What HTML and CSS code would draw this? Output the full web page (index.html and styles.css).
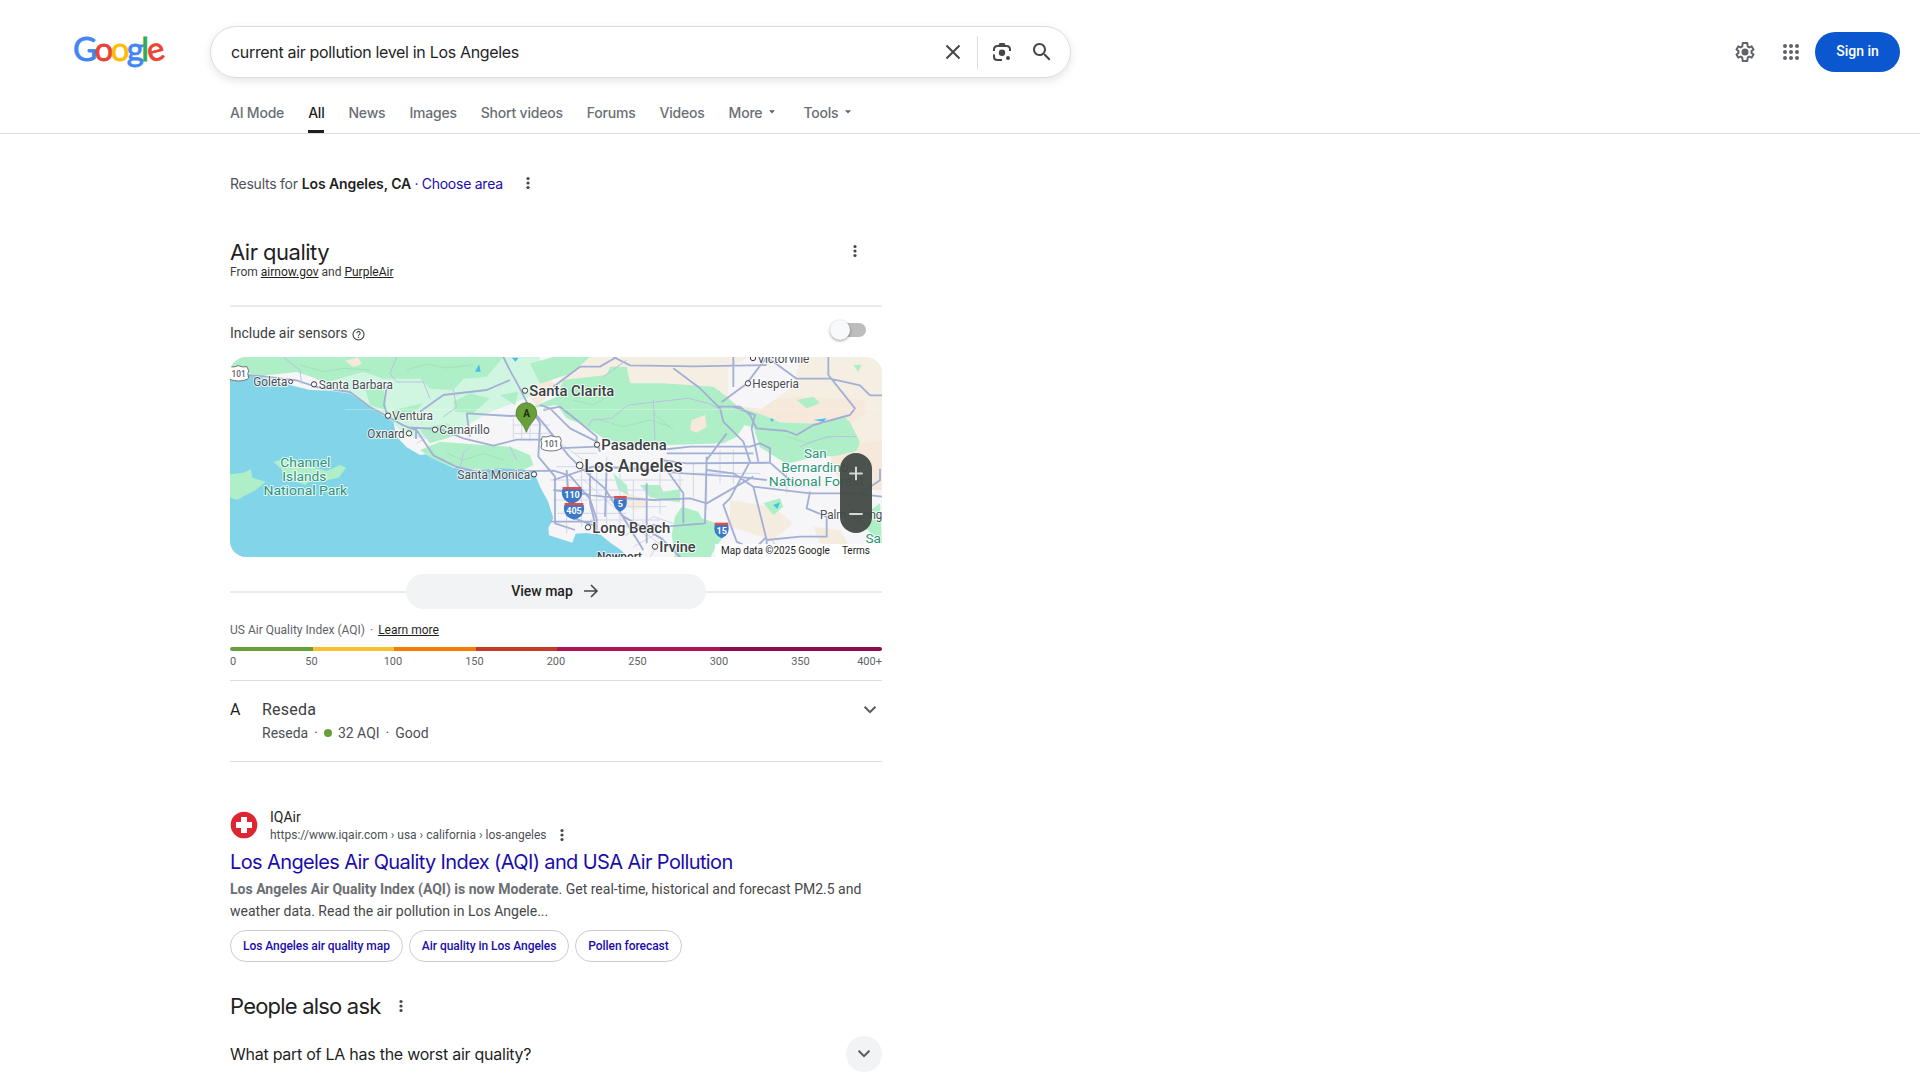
FILE: index.html
```html
<!DOCTYPE html>
<html lang="en">
<head>
<meta charset="utf-8">
<title>current air pollution level in Los Angeles - Google Search</title>
<link rel="stylesheet" href="styles.css">
</head>
<body>
<svg class="defs" width="0" height="0">
  <symbol id="dots" viewBox="0 0 6 14"><circle cx="3" cy="2.5" r="1.6"/><circle cx="3" cy="7" r="1.6"/><circle cx="3" cy="11.5" r="1.6"/></symbol>
  <symbol id="chevron" viewBox="0 0 14 10"><path d="M1.6 1.8 7 7.2l5.400-5.400" fill="none" stroke="currentColor" stroke-width="2"/></symbol>
  <symbol id="caret" viewBox="0 0 6 4"><path d="M0 .3h6L3 3.500z"/></symbol>
</svg>
<header class="header">
  <div class="topbar">
    <a class="logo" aria-label="Google"><span class="b">G</span><span class="r">o</span><span class="y">o</span><span class="b">g</span><span class="g">l</span><span class="r e">e</span></a>
    <form class="search">
      <span class="query">current air pollution level in Los Angeles</span>
      <svg class="clear" width="16" height="16" viewBox="0 0 16 16"><path d="M1.500 1.500l13 13M14.500 1.500l-13 13" stroke="#474747" stroke-width="2"/></svg>
      <span class="sep"></span>
      <svg class="lens" width="20" height="20" viewBox="0 0 20 20"><g fill="none" stroke="#474747" stroke-width="2"><path d="M2 9V7.500Q2 4 5.500 4h9Q18 4 18 7.500V9"/><path d="M2 12.500v2.500Q2 18 5.500 18H10"/></g><path d="M6 4l1.500-3h5L14 4z" fill="#474747"/><circle cx="10" cy="10.800" r="3.200" fill="#474747"/><circle cx="16" cy="16" r="2" fill="#474747"/></svg>
      <svg class="glass" width="24" height="24" viewBox="0 0 24 24"><path fill="#474747" d="M15.500 14h-.79l-.28-.27C15.410 12.590 16 11.110 16 9.500 16 5.910 13.090 3 9.500 3S3 5.910 3 9.500 5.910 16 9.500 16c1.610 0 3.090-.59 4.230-1.570l.27.28v.79l5 4.990L20.490 19l-4.990-5zm-6 0C7.010 14 5 11.990 5 9.500S7.010 5 9.500 5 14 7.010 14 9.500 11.990 14 9.500 14z"/></svg>
    </form>
    <div class="account">
      <svg class="gear" width="24" height="24" viewBox="0 0 24 24"><path fill="none" stroke="#5f6368" stroke-width="2" stroke-linejoin="round" d="M18.500 12.900q.1-.9 0-1.800l2-1.600-1.800-3.100-2.400 1q-.8-.6-1.600-.9L14.300 3H9.700l-.4 3.500q-.9.300-1.600.9l-2.400-1-1.800 3.100 2 1.600q-.1.900 0 1.800l-2 1.600 1.800 3.100 2.400-1q.7.600 1.600.9l.4 3.500h4.600l.4-3.500q.8-.3 1.600-.9l2.400 1 1.800-3.100z"/><circle cx="12" cy="12" r="3.500" fill="#5f6368"/></svg>
      <svg class="apps" width="18" height="18" viewBox="0 0 18 18" fill="#5f6368"><circle cx="3" cy="3" r="2"/><circle cx="9" cy="3" r="2"/><circle cx="15" cy="3" r="2"/><circle cx="3" cy="9" r="2"/><circle cx="9" cy="9" r="2"/><circle cx="15" cy="9" r="2"/><circle cx="3" cy="15" r="2"/><circle cx="9" cy="15" r="2"/><circle cx="15" cy="15" r="2"/></svg>
      <a class="signin">Sign in</a>
    </div>
  </div>
  <nav class="tabs">
    <a>AI Mode</a><a class="active">All</a><a>News</a><a>Images</a><a>Short videos</a><a>Forums</a><a>Videos</a><a>More<svg class="caret"><use href="#caret"/></svg></a><a>Tools<svg class="caret"><use href="#caret"/></svg></a>
  </nav>
</header>
<main class="main">
  <div class="location"><span class="loc-for">Results for</span><b>Los Angeles, CA</b><span class="loc-dot">·</span><a>Choose area</a><svg class="dots"><use href="#dots"/></svg></div>

  <section class="air">
    <div class="air-head">
      <div><h2>Air quality</h2><p class="source">From <u>airnow.gov</u> and <u>PurpleAir</u></p></div>
      <svg class="dots"><use href="#dots"/></svg>
    </div>
    <div class="sensors">
      <span>Include air sensors</span>
      <svg class="help" width="13" height="13" viewBox="0 0 13 13"><circle cx="6.500" cy="6.500" r="5.500" fill="none" stroke="#3c4043" stroke-width="1.100"/><path d="M4.800 5.200a1.700 1.700 0 1 1 2.500 1.400q-.8.500-.8 1.200" fill="none" stroke="#3c4043" stroke-width="1.100"/><circle cx="6.500" cy="9.300" r=".75" fill="#3c4043"/></svg>
      <span class="toggle"><i></i></span>
    </div>
    <div class="map">
      <svg width="652" height="200" viewBox="30 51 1956 600">
        <rect x="30" y="51" width="1956" height="600" fill="#f6f6f8"/>
        <!-- desert and dry hills -->
        <path fill="#f5eee3" d="M1050 51h936v300h-110l-60-130-180-50-90 40-120-50-180-10-120 20-120-20z"/>
        <path fill="#f6e8da" d="M1400 160l80 10 40 40 60-20 160-20 190 10 10 40-60 40-380-30-100-40zM1830 330l156-30v150h-90l-60-60zM900 130l80-30 30 40-60 60z"/>
        <path fill="#f5ece0" d="M1530 480l130 20 60 50-60 50-130-40zM1210 455l60 20 20 25-50 10-40-30zM1780 560l80 10 30 50-90-10z"/>
        <path fill="#f6f6f8" d="M1525 85l60-34h160l-30 90-90 65-100-10zM1700 350l130 30 30 90-130 20-100-60z"/>
        <!-- hills and parks -->
        <path fill="#d0f6e2" d="M80 51h300l140 60 120 0 200-60 120 0-10 110-150 60-100 60-140 10-50-50-100-40-130-90z"/>
        <path fill="#aeefc8" d="M60 51h790l-50 60-70 5-30 35-70-5-30-30-110 0-60-20-110 30-90-30-110 12-80-20-70 0zM430 130l60 20 10 60-50-15zM700 185l50-25 60 15-50 45-55-5zM840 165l55-10-10 40zM930 70l70-19h110l-60 50-90 30zM610 190l-50 50-40 0 0-30zM600 270l80-20 50 30-100 30z"/>
        <path fill="#aeefc8" d="M600 330l60-25 130 10 80 5 60 25 10 30-40 20-110-5-90-8-60-25z"/>
        <path fill="#aeefc8" d="M930 205l80-35 20-50 130-15 10-25h50l10 50 100 0 150 10 40 30 70 60-40 60-40 20-160 5-110 5-90-25-60-40-50-20-30-40z"/>
        <path fill="#aeefc8" d="M1510 210l50-8 60 20 60 25 130 5 60-25 20 20 30 60-10 25-60 15-70 5-80 20-80-50-20-60-80-20zM1730 180l50-10 20 20-40 15zM1465 155l30-5 20 20-30 5zM1180 400l40 35 5 30-30-15zM1260 435l60 0 10 20 50-8 0 40-40-5-50-10zM1365 530l20-30 50 15 10 20 60 20 10 30-30 40-30 60h-110l20-40-10-60zM1630 490l50-15 10 25-30 25zM1900 75h25l-10 20zM1910 540l70-50 6 120z"/>
        <path fill="#f6e8da" d="M1415 240l40-15 5 35-30 18-20-8zM375 62l40-10 10 20-25 10z"/>
        <g fill="none" stroke="#9bdcba" stroke-width="3" opacity=".7"><path d="M240 75l70 20 60-10 80 5M560 90l60-18 60 12 80-10M680 340l50 20 60-20 60 20M1140 240l70 20 80-20 60 20M1300 220l60 50M1700 290l60 18 80-20M1060 180l60 15 50-30"/></g>
        <!-- ocean and islands -->
        <path fill="#82d5e9" d="M30 104l80 3 60 18 100 25 60 2 60 9 40 28 55 35 35 21 10 45 30 32 40 23 17-2 23 13 60 27 60 9 80-7 65 3 30 8 12 13 15 35 22 40 16 50-15 30 2 22 70 22 10-27 30-2 45 5 30 25 30 20 30 31H30z"/>
        <path fill="#aeefc8" d="M30 403l40-5 22-10 5 25 40 12-30 25-35 18-20 12-22-7zM160 365l45-10 50 20 65 18 40-18 18 8-22 30-45 10-35-8-20 20-60-20-14-30z"/>
        <!-- local streets -->
        <g fill="none" stroke="#d2d8eb" stroke-width="3"><path d="M880 235v60M905 235v65M930 225v80M880 255h110M880 280h120M990 420h400M1000 450h300M1000 480h260M1010 520h210M1040 400v180M1085 360v200M1130 390v160M1160 350v220M1200 400v190M1240 420v170M1280 440v150M1320 370v150M1010 380h270M1080 410l200 180M1210 590l90-60 60 20M1460 350v160M1500 330v100M1540 330v100M1450 370h180M1460 400h160M1110 540h210M1250 560l80 60M1700 330v130M1650 440h150M1180 560h110M1220 500h120M1350 400h110M1380 380v90M1420 370v110M1060 340h70M1010 300l80 60M1240 620l90-50M1290 651l40-60M580 290h80M590 310l50-30"/></g>
        <!-- highways -->
        <g fill="none" stroke="#a3b0d3" stroke-width="5.500" stroke-linejoin="round">
          <path d="M30 100l100 9 100 12 60 20 100 15 60 45 55 30 45 25 40 15 50 75 70 35 60 13 120 0 110-2 50 15 60 70 20 60 0 50M30 112l60-4M850 51l20 40 30 55 25 50 50 60 70 90 30 30 80 70 50 80 120 70 60 60M930 200l30 50-5 100 50 60 0 140 60 20M740 220l130 8 70-3M560 262l100 5 70 28 90 22 70-18 80 0M600 215l70-50 130-15 70-30M500 140l-8 55 10 30M740 220l10 70M588 262v35M960 195l30 10 60 60 80 40 10 30M970 210l50-10 50 40 60 50 0 30-120 5M1000 420l120-40 200 10 70 10 160 10 90 10M1000 450l150 20 150 10 110-5 50 15 140-80M1040 390l10 140 80 30M1110 400v90l15 60M1160 380l-5 150M990 545h140M1190 500l80 130"/>
          <path d="M1000 140l80-60 60 0 50-29M1180 51l50 25 190 3 220-4M1360 85l80 60 60 60 10 40 60 60 20 60-60 110-20 20 40 110 50 25M1540 51v90M1640 51l-60 80-75 55M1490 200l70 0 30 25 20 40 90 8 30 12 50-30 110-30 15-20-80-100V51M1640 51l90 65 100 0 90 20 30 30 36 0M1540 200l65 25-10 40 20 100M1320 330l90-10 180 0 30-10 30 15v40M1340 340h260M1320 360l80 10 250-2 80 70M1460 350l-5 200-120 10-40-5M1460 360l60-80M1340 390l50 70 0 90M1280 430v180M1600 440l-60-40-80-10M1600 440l170 20 130 0 86 10M1600 440l40 160 100-10 80 0 0-60-60-25 10-50M1640 600v51M1640 590l-60 61M1920 461l60-40v-35"/>
        </g>
        <g fill="none" stroke="#b9c2e0" stroke-width="3"><path d="M190 51l50 40 5 40M530 51l-20 50 20 25 80 0 20 50M700 151l10 50-40 30M1105 260l10-20 60-5 50-40 180-20 60 15 40 20M1300 180l5 120M1220 60l-70 50M720 385l10-45 20-20M890 360l-20-40M1655 600l40 51M1740 320l80-30 90 0"/></g>
        <g fill="#43bdea"><path d="M765 95l12-22 5 22zM876 53l20 0-10 12zM1650 235l12 3-6 8zM1780 240l40-5-10 10zM1660 495l20-8-8 20z"/></g>
        <path d="M375 208h1611" stroke="#fff" stroke-width="2" opacity=".45"/>
        <!-- place names -->
        <g class="place" fill="#f8f8f8" stroke="#3c4043" stroke-width="3"><circle cx="212" cy="125" r="6"/><circle cx="282" cy="133" r="8"/><circle cx="504" cy="227" r="8"/><circle cx="567" cy="280" r="8"/><circle cx="645" cy="269" r="8"/><circle cx="942" cy="403" r="8"/><circle cx="915" cy="152" r="8"/><circle cx="1131" cy="314" r="8"/><circle cx="1079" cy="376" r="10"/><circle cx="1104" cy="562" r="8"/><circle cx="1305" cy="620" r="8"/><circle cx="1584" cy="130" r="8"/><circle cx="1599" cy="54" r="8"/></g>
        <g class="towns">
          <text x="100" y="137" textLength="102" lengthAdjust="spacingAndGlyphs">Goleta</text><text x="296" y="146" textLength="223" lengthAdjust="spacingAndGlyphs">Santa Barbara</text><text x="516" y="239" textLength="123" lengthAdjust="spacingAndGlyphs">Ventura</text><text x="442" y="293" textLength="112" lengthAdjust="spacingAndGlyphs">Oxnard</text><text x="658" y="281" textLength="151" lengthAdjust="spacingAndGlyphs">Camarillo</text><text x="712" y="416" textLength="219" lengthAdjust="spacingAndGlyphs">Santa Monica</text><text x="1597" y="143" textLength="140" lengthAdjust="spacingAndGlyphs">Hesperia</text><text x="1612" y="69" textLength="156" lengthAdjust="spacingAndGlyphs">Victorville</text><text x="1800" y="538" textLength="205" lengthAdjust="spacingAndGlyphs">Palm Springs</text>
        </g>
        <g class="cities"><text x="928" y="167" textLength="255" lengthAdjust="spacingAndGlyphs">Santa Clarita</text><text x="1144" y="329" textLength="196" lengthAdjust="spacingAndGlyphs">Pasadena</text><text x="1117" y="578" textLength="234" lengthAdjust="spacingAndGlyphs">Long Beach</text><text x="1318" y="635" textLength="109" lengthAdjust="spacingAndGlyphs">Irvine</text><text class="sub" x="1131" y="662" textLength="135" lengthAdjust="spacingAndGlyphs">Newport</text><text class="metro" x="1093" y="395" textLength="295" lengthAdjust="spacingAndGlyphs">Los Angeles</text></g>
        <g class="parks"><text x="256" y="381" textLength="150" lengthAdjust="spacingAndGlyphs">Channel</text><text x="253" y="423" textLength="132" lengthAdjust="spacingAndGlyphs">Islands</text><text x="256" y="465" textLength="251" lengthAdjust="spacingAndGlyphs">National Park</text><text x="1786" y="354" textLength="68" lengthAdjust="spacingAndGlyphs">San</text><text x="1785" y="396" textLength="203" lengthAdjust="spacingAndGlyphs">Bernardino</text><text x="1789" y="438" textLength="286" lengthAdjust="spacingAndGlyphs">National Forest</text><text x="1971" y="610">San</text></g>
        <!-- route shields -->
        <g class="route"><path d="M29 80q13 3 26-3 13 6 26 3l5 12q-5 8 0 22-7 8-31 9-24-1-30-9 5-14 0-22z"/><text x="56" y="111">101</text><path d="M967 290q13 3 26-3 13 6 26 3l5 12q-5 8 0 22-7 8-31 9-24-1-30-9 5-14 0-22z"/><text x="994" y="321">101</text></g>
        <g class="interstate"><path d="M1027 447h58q8 34-29 44-37-10-29-44z"/><path class="cap" d="M1028 441h56v7h-56z"/><text x="1056" y="475">110</text><path d="M1033 495h58q8 34-29 44-37-10-29-44z"/><path class="cap" d="M1034 489h56v7h-56z"/><text x="1062" y="523">405</text><path d="M1183 475h36q7 28-18 40-25-12-18-40z"/><path class="cap" d="M1182 468h38v7h-38z"/><text x="1201" y="501">5</text><path d="M1484 555h41q7 28-20 40-28-12-21-40z"/><path class="cap" d="M1484 548h41v7h-41z"/><text x="1505" y="583">15</text></g>
        <!-- sensor pin -->
        <path d="M919 277q-5-17-21-35a31 31 0 1 1 42 0q-16 18-21 35z" fill="#689f38" stroke="#45702a" stroke-width="2"/><text class="pin" x="920" y="232">A</text>
      </svg>
      <div class="zoom"><svg width="32" height="80" viewBox="0 0 32 80"><path d="M9.300 20.500h13.400M16 13.800v13.400M9.300 61h13.400" stroke="#d5d8d6" stroke-width="2"/></svg></div>
      <div class="credit"><span>Map data ©2025 Google</span><span>Terms</span></div>
    </div>
    <div class="viewmap"><a>View map<svg width="16" height="14" viewBox="0 0 16 14"><path d="M1 7h13M8 1l6 6-6 6" fill="none" stroke="#474747" stroke-width="1.600"/></svg></a></div>
    <p class="index"><span>US Air Quality Index (AQI)</span><i>·</i><u>Learn more</u></p>
    <div class="scale"><i></i><i></i><i></i><i></i><i></i><i></i></div>
    <div class="ticks"><span>0</span><span>50</span><span>100</span><span>150</span><span>200</span><span>250</span><span>300</span><span>350</span><span>400+</span></div>
    <div class="station">
      <span class="mark">A</span>
      <div><h3>Reseda</h3><p><span>Reseda</span><i>·</i><b></b><span>32 AQI</span><i>·</i><span>Good</span></p></div>
      <svg class="chev"><use href="#chevron"/></svg>
    </div>
  </section>

  <article class="result">
    <div class="site">
      <svg width="28" height="28" viewBox="0 0 28 28"><circle cx="14" cy="14" r="13.300" fill="#dd2632"/><path d="M11 6h6v5h5v6h-5v5h-6v-5H6v-6h5z" fill="#fff"/></svg>
      <div><div class="name">IQAir</div><div class="url"><span>https://www.iqair.com › usa › california › los-angeles</span><svg class="dots"><use href="#dots"/></svg></div></div>
    </div>
    <h3 class="title">Los Angeles Air Quality Index (AQI) and USA Air Pollution</h3>
    <p class="snippet"><b>Los Angeles Air Quality Index (AQI) is now Moderate</b><span>. Get real-time, historical and forecast PM2.5 and</span><br><span>weather data. Read the air pollution in Los Angele...</span></p>
    <div class="chips"><a>Los Angeles air quality map</a><a>Air quality in Los Angeles</a><a>Pollen forecast</a></div>
  </article>

  <section class="ask">
    <div class="ask-head"><h2>People also ask</h2><svg class="dots"><use href="#dots"/></svg></div>
    <div class="question"><span>What part of LA has the worst air quality?</span><span class="expand"><svg class="chev"><use href="#chevron"/></svg></span></div>
  </section>
</main>
</body>
</html>
```
FILE: styles.css
```css
* { box-sizing: border-box; margin: 0; padding: 0; }
body { width: 1920px; height: 1080px; overflow: hidden; background: #fff; color: #1f1f1f; font-family: Roboto, Arial, sans-serif; font-size: 14px; }
svg { display: block; flex: none; }
i { font-style: normal; }
h2, h3 { font-weight: 400; }
.defs { display: none; }
span, a, b, u { white-space: nowrap; }
.dots { width: 6px; height: 14px; fill: #474747; }

.header { height: 134px; border-bottom: 1px solid #dadce0; }
.topbar { display: flex; padding-top: 26px; height: 90px; }
.logo { width: 137px; margin-left: 73px; height: 52px; line-height: 44px; font-family: Lato, sans-serif; font-size: 33px; letter-spacing: -2.6px; display: flex; -webkit-text-stroke: .8px currentColor; }
.logo .e { display: inline-block; transform: rotate(-14deg); }
.logo .b { color: #4285f4; } .logo .r { color: #ea4335; } .logo .y { color: #fbbc05; } .logo .g { color: #34a853; }
.search { width: 861px; height: 52px; border: 1px solid #dadce0; border-radius: 26px; box-shadow: 0 3px 8px rgba(60,64,67,.13); display: flex; align-items: center; padding: 0 16px 0 20px; }
.query { flex: 1; font-family: Inter, sans-serif; font-size: 16px; letter-spacing: -.33px; }
.sep { width: 1px; height: 33px; background: #dadce0; margin: 0 14px 0 16px; }
.glass { margin-left: 18px; }
.account { flex: 1; display: flex; justify-content: flex-end; align-items: center; height: 52px; padding-right: 20px; }
.apps { margin: 0 15px 0 25px; }
.signin { width: 85px; height: 40px; border-radius: 20px; background: #0b57d0; color: #fff; font-weight: 500; text-align: center; line-height: 39px; }
.tabs { display: flex; gap: 24px; margin-left: 230px; height: 43px; }
.tabs a { font-family: Inter, sans-serif; font-weight: 500; font-size: 14px; letter-spacing: -.21px; color: #6a6f75; display: flex; align-items: center; height: 43px; padding-top: 1px; }
.tabs .active { color: #1f1f1f; border-bottom: 3px solid #1f1f1f; padding-top: 4px; }
.caret { width: 6px; height: 4px; fill: #5f6368; margin: 0 4px 0 7px; }

.main { width: 652px; margin-left: 230px; }
.location { display: flex; align-items: center; height: 20px; margin: 39px 0 1px; color: #4d5156; font-family: Inter, sans-serif; letter-spacing: -.25px; }
.location b { margin-left: 4px; color: #1f1f1f; font-weight: 600; letter-spacing: -.1px; }
.loc-dot { margin: 0 3.4px; color: #1a0dab; }
.location a { color: #1a0dab; }
.location .dots { margin-left: 22px; }

.air-head { display: flex; justify-content: space-between; height: 113px; padding-top: 44px; border-bottom: 2px solid #ebebeb; }
.air-head .dots { margin: 6px 24px 0 0; }
.air-head h2, .ask h2 { font-family: Inter, sans-serif; font-size: 22px; line-height: 28px; letter-spacing: -.5px; }
.ask h2 { letter-spacing: -.8px; }
.source { font-size: 12px; line-height: 16px; color: #3c4043; margin-top: -2px; }
.source u, .index u { color: #1f1f1f; text-underline-offset: 1px; }
.sensors { display: flex; align-items: center; height: 50px; padding: 2px 16px 0 0; color: #3c4043; }
.help { margin: 2px 0 0 4px; }
.toggle { width: 34px; height: 14px; border-radius: 7px; background: #bdbdbd; margin: -6px 0 0 auto; display: flex; align-items: center; }
.toggle i { width: 20px; height: 20px; flex: none; border-radius: 50%; background: #f8f9fa; margin-left: -2px; box-shadow: 0 1px 3px rgba(0,0,0,.4); }

.map { height: 200px; border-radius: 16px; overflow: hidden; position: relative; }
.map text { font-family: Roboto, sans-serif; paint-order: stroke; stroke: #fff; stroke-width: 6px; stroke-opacity: .8; stroke-linejoin: round; }
.towns text { font-size: 37px; fill: #4a4e53; }
.cities text { font-size: 45px; font-weight: 500; fill: #3c4043; }
.cities .metro { font-size: 53px; }
.cities .sub { font-size: 36px; }
.parks text { font-size: 41px; fill: #2b9477; text-anchor: middle; }
.route path { fill: #fff; stroke: #70757a; stroke-width: 3px; }
.route text { font-size: 25px; fill: #5f6368; text-anchor: middle; font-weight: 500; }
.interstate path { fill: #3b78c8; }
.interstate .cap { fill: #e5494a; }
.interstate text { font-size: 27px; fill: #fff; stroke: none; font-weight: 700; text-anchor: middle; }
.map .pin { font-size: 30px; font-weight: 700; fill: #1b2d10; stroke: none; text-anchor: middle; }
.zoom { position: absolute; left: 610px; top: 96px; width: 32px; height: 80px; border-radius: 16px; background: rgba(66,74,70,.95); }
.credit { position: absolute; right: 0; bottom: 0; width: 167px; height: 13px; background: rgba(255,255,255,.85); display: flex; justify-content: space-between; padding: 0 12px 0 6px; font-size: 10px; line-height: 13px; color: #1f1f1f; }

.viewmap { height: 35px; margin-top: 17px; display: flex; align-items: center; justify-content: center; }
.viewmap::before, .viewmap::after { content: ""; flex: 1; height: 2px; background: #ebebeb; }
.viewmap a { width: 300px; height: 35px; border-radius: 18px; background: #f1f3f4; display: flex; align-items: center; justify-content: center; gap: 10px; font-weight: 500; font-size: 14px; padding: 0 2px 1px 0; }
.index { display: flex; margin-top: 12px; height: 18px; line-height: 18px; font-size: 12px; color: #5f6368; }
.index i { margin: 0 5px; }
.scale { display: grid; grid-template-columns: 83px 81px 82px 81px 163px 162px; height: 4px; margin-top: 8px; border-radius: 2px; overflow: hidden; }
.scale i:nth-child(1) { background: #689f38; } .scale i:nth-child(2) { background: #fbc02d; } .scale i:nth-child(3) { background: #f57c00; }
.scale i:nth-child(4) { background: #c53929; } .scale i:nth-child(5) { background: #ad1457; } .scale i:nth-child(6) { background: #880e4f; }
.ticks { display: grid; grid-template-columns: 40.700px repeat(7, 81.5px) 40.800px; height: 30px; border-bottom: 1px solid #dadce0; font-size: 11px; line-height: 22px; color: #5f6368; text-align: center; }
.ticks span:first-child { text-align: left; }
.ticks span:last-child { justify-self: end; }
.station { display: flex; height: 81px; padding-top: 19px; border-bottom: 1px solid #dadce0; }
.mark { width: 32px; font-size: 16px; line-height: 20px; }
.station h3 { font-size: 16px; line-height: 20px; letter-spacing: .25px; color: #3c4043; }
.station p { display: flex; align-items: center; height: 20px; margin-top: 3px; color: #4d5156; }
.station p i { margin: 0 6px; }
.station p b { width: 8px; height: 8px; border-radius: 50%; background: #689f38; margin-right: 6px; }
.chev { width: 14px; height: 10px; color: #5a5a5a; }
.station .chev { margin: 5px 5px 0 auto; }

.result { margin-top: 45px; }
.site { display: flex; height: 40px; }
.site > svg { margin: 4px 12px 0 0; }
.name { line-height: 20px; }
.url { display: flex; align-items: center; height: 18px; margin-top: -1px; font-size: 12px; color: #4d5156; }
.url .dots { margin-left: 12px; }
.title { font-family: Inter, sans-serif; font-size: 20px; line-height: 26px; height: 26px; margin-top: 2px; letter-spacing: -.62px; color: #1a0dab; white-space: nowrap; }
.snippet { line-height: 22px; margin-top: 3px; color: #474747; }
.snippet b { font-weight: 700; color: #6b6f73; }
.chips { display: flex; gap: 6px; margin-top: 8px; }
.chips a { height: 32px; border: 1px solid #c9cdd2; border-radius: 16px; padding: 0 12px; font-size: 12px; font-weight: 500; letter-spacing: -.05px; line-height: 30px; color: #1a0dab; }
.ask-head { display: flex; align-items: center; height: 28px; margin-top: 30px; }
.ask-head .dots { margin-left: 18px; }
.question { display: flex; justify-content: space-between; align-items: center; height: 36px; margin-top: 16px; font-family: Inter, sans-serif; font-size: 16px; letter-spacing: -.26px; }
.expand { width: 36px; height: 36px; border-radius: 50%; background: #f1f3f4; display: flex; align-items: center; justify-content: center; }
```
